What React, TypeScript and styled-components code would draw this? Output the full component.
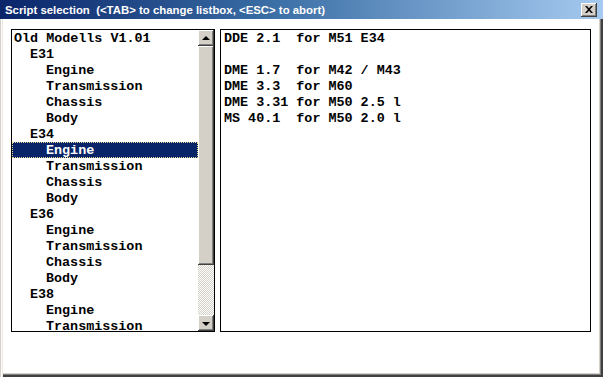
import React from 'react'
import styled, { createGlobalStyle } from 'styled-components'

const GlobalStyle = createGlobalStyle`
  html, body {
    margin: 0;
    padding: 0;
    background: #ffffff;
  }
`

const Window = styled.div`
  width: 603px;
  height: 377px;
  box-sizing: border-box;
  display: flex;
  flex-direction: column;
  background: #ffffff;
  box-shadow: inset 1px 0 #d4d0c8, inset 2px 0 #ffffff, inset 3px 0 #ece9e2,
    inset -1px -1px #404040, inset -2px -2px #404040, inset -3px -3px #808080,
    inset -4px -4px #d4d0c8;
`

const TitleBar = styled.div`
  height: 19px;
  flex: none;
  display: flex;
  align-items: center;
  justify-content: space-between;
  padding: 0 6px 0 5px;
  background: linear-gradient(to right, #0a246a 0%, #3a6ea5 45%, #a6caf0 100%);
  color: #ffffff;
  font-family: 'Liberation Sans', Arial, sans-serif;
  font-weight: bold;
  font-size: 11.4px;
  white-space: pre;
`

const CloseButton = styled.div`
  width: 16px;
  height: 14px;
  box-sizing: border-box;
  background: #d4d0c8;
  display: flex;
  align-items: center;
  justify-content: center;
  box-shadow: inset -1px -1px #404040, inset 1px 1px #ffffff, inset -2px -2px #808080;
`

const Body = styled.div`
  display: flex;
  gap: 5px;
  padding: 10px 12px 0 11px;
`

const Box = styled.div<{ $width: number }>`
  width: ${p => p.$width}px;
  height: 303px;
  box-sizing: border-box;
  border: 1px solid #000000;
  display: flex;
  overflow: hidden;
  background: #ffffff;
`

const List = styled.div`
  flex: 1;
  overflow: hidden;
`

const Row = styled.div<{ $selected?: boolean; $pad: number }>`
  height: 16px;
  line-height: 17px;
  box-sizing: border-box;
  padding-left: ${p => p.$pad}px;
  font-family: 'Liberation Mono', 'DejaVu Sans Mono', monospace;
  font-weight: bold;
  font-size: 13.4px;
  white-space: pre;
  color: ${p => (p.$selected ? '#ffffff' : '#000000')};
  background: ${p => (p.$selected ? '#0a246a' : 'transparent')};
  outline: ${p => (p.$selected ? '1px dotted #e8d890' : 'none')};
  outline-offset: -1px;
`

const ScrollBar = styled.div`
  width: 16px;
  flex: none;
  display: flex;
  flex-direction: column;
  background-color: #ffffff;
  background-image: repeating-conic-gradient(#d4d0c8 0 25%, #ffffff 0 50%);
  background-size: 2px 2px;
`

const ScrollButton = styled.div`
  width: 16px;
  height: 16px;
  flex: none;
  box-sizing: border-box;
  background: #d4d0c8;
  display: flex;
  align-items: center;
  justify-content: center;
  box-shadow: inset -1px -1px #404040, inset 1px 1px #ffffff, inset -2px -2px #808080;
`

const Thumb = styled.div`
  height: 219px;
  flex: none;
  background: #d4d0c8;
  box-shadow: inset -1px -1px #404040, inset 1px 1px #ffffff, inset -2px -2px #808080;
`

const Track = styled.div`
  flex: 1;
`

const Arrow = styled.div<{ $down?: boolean }>`
  width: 0;
  height: 0;
  border-left: 4px solid transparent;
  border-right: 4px solid transparent;
  ${p =>
    p.$down
      ? 'border-top: 4px solid #000000; margin-top: 1px;'
      : 'border-bottom: 4px solid #000000; margin-top: -1px;'}
`

const Text = styled.div`
  padding: 0 0 0 3px;
  width: 100%;
`

const tree: [string, number][] = [
  ['Old Modells V1.01', 0],
  ['E31', 1],
  ['Engine', 2],
  ['Transmission', 2],
  ['Chassis', 2],
  ['Body', 2],
  ['E34', 1],
  ['Engine', 2],
  ['Transmission', 2],
  ['Chassis', 2],
  ['Body', 2],
  ['E36', 1],
  ['Engine', 2],
  ['Transmission', 2],
  ['Chassis', 2],
  ['Body', 2],
  ['E38', 1],
  ['Engine', 2],
  ['Transmission', 2],
]

const scripts = [
  'DDE 2.1  for M51 E34',
  '',
  'DME 1.7  for M42 / M43',
  'DME 3.3  for M60',
  'DME 3.31 for M50 2.5 l',
  'MS 40.1  for M50 2.0 l',
]

export default function App() {
  return (
    <>
      <GlobalStyle />
      <Window>
        <TitleBar>
          <span>Script selection  (&lt;TAB&gt; to change listbox, &lt;ESC&gt; to abort)</span>
          <CloseButton>
            <svg width="8" height="7" viewBox="0 0 8 7">
              <path d="M0 0h2l2 2.2L6 0h2L5 3.5 8 7H6L4 4.8 2 7H0l3-3.5z" fill="#000" />
            </svg>
          </CloseButton>
        </TitleBar>
        <Body>
          <Box $width={204}>
            <List>
              {tree.map(([label, level], i) => (
                <Row key={i} $pad={2 + level * 16} $selected={i === 7}>
                  {label}
                </Row>
              ))}
            </List>
            <ScrollBar>
              <ScrollButton>
                <Arrow />
              </ScrollButton>
              <Thumb />
              <Track />
              <ScrollButton>
                <Arrow $down />
              </ScrollButton>
            </ScrollBar>
          </Box>
          <Box $width={371}>
            <Text>
              {scripts.map((s, i) => (
                <Row key={i} $pad={0}>
                  {s}
                </Row>
              ))}
            </Text>
          </Box>
        </Body>
      </Window>
    </>
  )
}
